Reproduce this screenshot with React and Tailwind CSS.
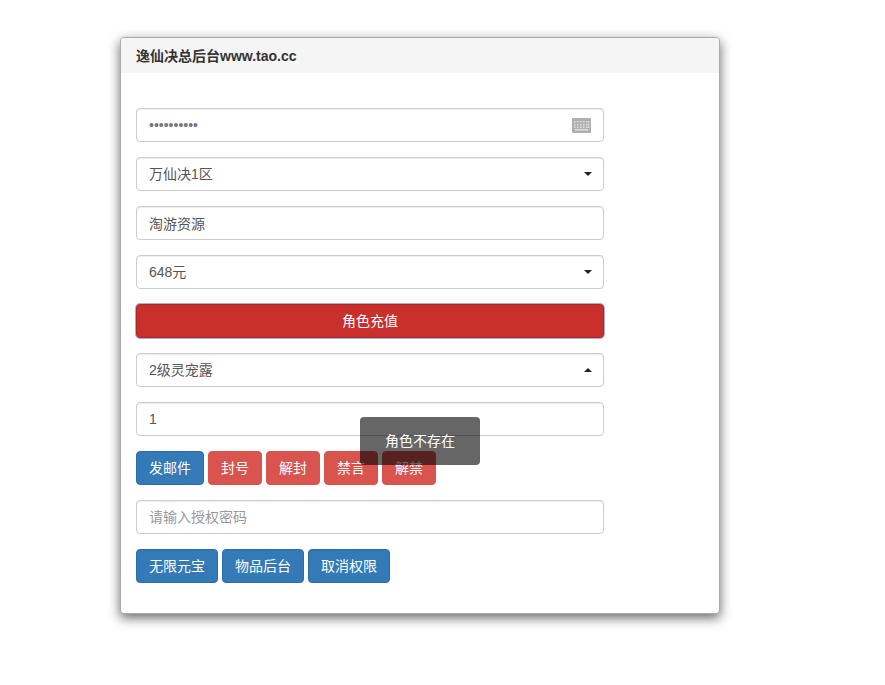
import { useState } from 'react'

const field = 'block h-[34px] w-full rounded border border-[#ccc] bg-white px-3 text-sm text-[#555] shadow-[inset_0_1px_1px_rgba(0,0,0,0.075)] outline-none'

// Petit clavier gris à droite du champ mot de passe
function KeyboardIcon() {
  return (
    <svg className="absolute right-[13px] top-[10px]" width="19" height="15" viewBox="0 0 19 15">
      <rect width="19" height="15" rx="1" fill="#b0b0b0" />
      {[3, 6, 8.5].map((y) =>
        [2, 5, 8, 11, 14, 16].map((x) => (
          <rect key={`${x}-${y}`} x={x} y={y} width="1.5" height="1.5" fill="#dedede" />
        ))
      )}
      <rect x="3" y="11" width="13" height="1.5" fill="#dedede" />
    </svg>
  )
}

function Select({ value, options, open = false }) {
  const [current, setCurrent] = useState(value)
  return (
    <div className="relative">
      <select
        value={current}
        onChange={(e) => setCurrent(e.target.value)}
        className={`${field} appearance-none text-[#444]`}
      >
        {options.map((o) => (
          <option key={o}>{o}</option>
        ))}
      </select>
      {open ? (
        <span className="pointer-events-none absolute right-3 top-[15px] h-0 w-0 border-x-4 border-b-4 border-x-transparent border-b-[#222]" />
      ) : (
        <span className="pointer-events-none absolute right-3 top-[15px] h-0 w-0 border-x-4 border-t-4 border-x-transparent border-t-[#222]" />
      )}
    </div>
  )
}

function Btn({ children, red = false }) {
  return (
    <button
      className={`h-[34px] rounded border px-3 text-sm text-white ${
        red ? 'border-[#d9534f] bg-[#d9534f]' : 'border-[#2e6da4] bg-[#337ab7]'
      }`}
    >
      {children}
    </button>
  )
}

export default function App() {
  return (
    <div
      className="relative min-h-[685px] bg-white pl-[120px] pt-[37px] text-sm text-[#333]"
      style={{ fontFamily: '"Liberation Sans", "Noto Sans CJK SC", sans-serif' }}
    >
      <div className="w-[600px] overflow-hidden rounded border border-[#aaa] bg-white shadow-[0_4px_12px_rgba(0,0,0,0.6)]">
        <div className="flex h-[35px] items-center bg-[#f5f5f5] px-[15px] font-bold">逸仙决总后台www.tao.cc</div>

        <div className="flex w-[498px] flex-col gap-[15px] px-[15px] pb-[30px] pt-[35px]">
          <div className="relative">
            <input type="password" readOnly value="1234567890" className={`${field} text-[#777]`} />
            <KeyboardIcon />
          </div>
          <Select value="万仙决1区" options={['万仙决1区']} />
          <input readOnly value="淘游资源" className={field} />
          <Select value="648元" options={['648元']} />
          <button className="h-[34px] w-full rounded border border-[#ac2925] bg-[#c9302c] text-sm text-white ring-1 ring-[#9db0e0]">
            角色充值
          </button>
          <Select value="2级灵宠露" options={['2级灵宠露']} open />
          <input readOnly value="1" className={field} />
          <div className="flex gap-1">
            <Btn>发邮件</Btn>
            <Btn red>封号</Btn>
            <Btn red>解封</Btn>
            <Btn red>禁言</Btn>
            <Btn red>解禁</Btn>
          </div>
          <input placeholder="请输入授权密码" className={`${field} placeholder:text-[#999]`} />
          <div className="flex gap-1">
            <Btn>无限元宝</Btn>
            <Btn>物品后台</Btn>
            <Btn>取消权限</Btn>
          </div>
        </div>
      </div>

      {/* Toast par-dessus le formulaire */}
      <div className="absolute left-[360px] top-[417px] flex h-12 w-[120px] items-center justify-center rounded-sm bg-black/60 text-sm text-white">
        角色不存在
      </div>
    </div>
  )
}
